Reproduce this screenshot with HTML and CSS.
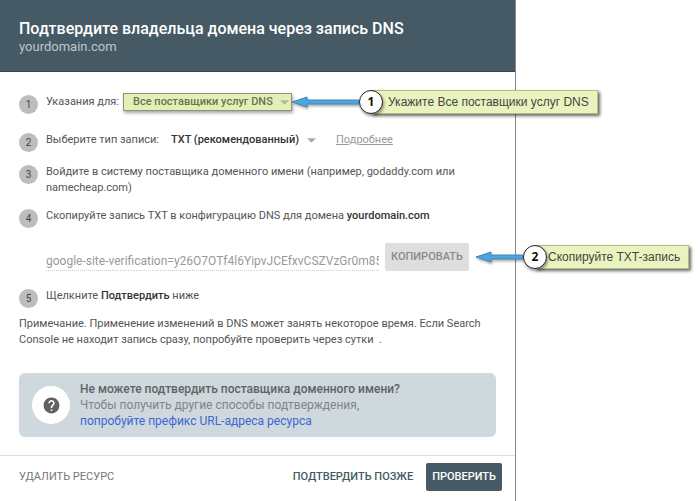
FILE: index.html
```html
<!DOCTYPE html>
<html lang="ru">
<head>
  <meta charset="UTF-8">
  <title>Подтверждение домена</title>
  <meta name="viewport" content="width=device-width, initial-scale=1.0">
  <link rel="stylesheet" href="styles.css">
</head>
<body>
  <main class="dialog">
    <header class="dialog-header">
      <h1 class="title">Подтвердите владельца домена через запись DNS</h1>
      <div class="domain">yourdomain.com</div>
    </header>

    <div class="dialog-body">
      <ol class="steps">
        <li class="step">
          <span class="num">1</span>
          <div class="step-content fields fields-provider">
            <label for="provider">Указания для:</label>
            <div class="picker picker-marked">
              <select id="provider">
                <option>Все поставщики услуг DNS</option>
              </select>
              <svg class="caret" viewBox="0 0 10 5"><path d="M0 0h10L5 5z"/></svg>
              <div class="callout callout-provider">
                <svg class="arrow" viewBox="0 0 68 12"><path d="M1 6 16 1v3h52v4H16v3z"/></svg>
                <span class="callout-num">1</span>
                <span class="callout-text">Укажите Все поставщики услуг DNS</span>
              </div>
            </div>
          </div>
        </li>
        <li class="step">
          <span class="num">2</span>
          <div class="step-content fields">
            <label for="record-type">Выберите тип записи:</label>
            <div class="picker">
              <select id="record-type">
                <option>TXT (рекомендованный)</option>
              </select>
              <svg class="caret" viewBox="0 0 10 5"><path d="M0 0h10L5 5z"/></svg>
            </div>
            <a class="more" href="#">Подробнее</a>
          </div>
        </li>
        <li class="step">
          <span class="num">3</span>
          <div class="step-content">Войдите в систему поставщика доменного имени (например, godaddy.com или namecheap.com)</div>
        </li>
        <li class="step">
          <span class="num">4</span>
          <div class="step-content">
            <label class="record-label" for="record">Скопируйте запись TXT в конфигурацию DNS для домена <b>yourdomain.com</b></label>
            <div class="copy-row">
              <input class="record" id="record" type="text" readonly value="google-site-verification=y26O7OTf4l6YipvJCEfxvCSZVzGr0m85">
              <div class="copy">
                <button class="btn btn-copy" type="button">Копировать</button>
                <div class="callout callout-copy">
                  <svg class="arrow" viewBox="0 0 48 12"><path d="M1 6 16 1v3h32v4H16v3z"/></svg>
                  <span class="callout-num">2</span>
                  <span class="callout-text">Скопируйте TXT-запись</span>
                </div>
              </div>
            </div>
          </div>
        </li>
        <li class="step">
          <span class="num">5</span>
          <div class="step-content">Щелкните <b>Подтвердить</b> ниже</div>
        </li>
      </ol>

      <p class="note">Примечание. Применение изменений в DNS может занять некоторое время. Если Search Console не находит запись сразу, попробуйте проверить через сутки &nbsp;.</p>

      <section class="help">
        <span class="help-icon">
          <svg viewBox="0 0 24 24"><path d="M12 2C6.48 2 2 6.48 2 12s4.48 10 10 10 10-4.48 10-10S17.52 2 12 2zm1 17h-2v-2h2v2zm2.07-7.75-.9.92C13.45 12.9 13 13.5 13 15h-2v-.5c0-1.1.45-2.1 1.17-2.83l1.24-1.26c.37-.36.59-.86.59-1.41 0-1.1-.9-2-2-2s-2 .9-2 2H8c0-2.21 1.79-4 4-4s4 1.79 4 4c0 .88-.36 1.68-.93 2.25z"/></svg>
        </span>
        <div>
          <b>Не можете подтвердить поставщика доменного имени?</b><br>
          Чтобы получить другие способы подтверждения,<br>
          <a class="help-link" href="#">попробуйте префикс URL-адреса ресурса</a>
        </div>
      </section>
    </div>

    <footer class="dialog-footer">
      <button class="btn btn-remove" type="button">Удалить ресурс</button>
      <button class="btn btn-later" type="button">Подтвердить позже</button>
      <button class="btn btn-verify" type="button">Проверить</button>
    </footer>
  </main>
</body>
</html>
```

FILE: styles.css
```css
* {
    box-sizing: border-box;
}

body {
    margin: 0;
    background: #fff;
    color: #555;
    font: 11px/16px Roboto, "Liberation Sans", sans-serif;
}

b {
    font-weight: 500;
    color: #333;
}

.dialog {
    display: flex;
    flex-direction: column;
    max-width: 516px;
    min-height: 100vh;
    border-right: 1px solid #888;
}

.dialog-header {
    padding: 19px 19px 16px;
    background: #455a64;
    border-bottom: 1px solid #35454d;
    color: #fff;
}

.title {
    margin: 0;
    font-size: 16px;
    line-height: 20px;
    font-weight: 500;
}

.domain {
    font-size: 13px;
    color: #bcc7cc;
}

.dialog-body {
    flex: 1;
    padding: 22px 19px 18px;
}

.steps {
    display: flex;
    flex-direction: column;
    gap: 12px;
    margin: 0;
    padding: 0;
    list-style: none;
}

.step {
    display: flex;
    gap: 8px;
}

.num {
    flex: none;
    width: 19px;
    height: 19px;
    margin-top: 1px;
    border-radius: 50%;
    background: #bdbdbd;
    color: #444;
    font-size: 10px;
    line-height: 20px;
    text-align: center;
}

.step-content {
    flex: 1;
    min-width: 0;
}

.fields {
    display: flex;
    align-items: center;
    height: 16px;
    margin-bottom: 4px;
    white-space: nowrap;
}

.fields-provider {
    margin-bottom: 10px;
}

/* drop-downs */
.picker {
    position: relative;
    display: flex;
    align-items: center;
    height: 18px;
    margin-left: 12px;
    padding-right: 4px;
}

.picker select {
    appearance: none;
    margin: 0;
    padding: 0 7px 0 0;
    border: 0;
    background: none;
    color: #333;
    font: inherit;
    font-weight: 500;
}

.caret {
    width: 9px;
    height: 5px;
    fill: #aaa;
}

.picker-marked {
    margin-left: 4px;
    padding: 0 2px 0 9px;
    border: 1px solid #8a937c;
    background: #e4efb8;
    box-shadow: 1px 2px 3px rgba(0, 0, 0, .35);
}

.picker-marked select {
    color: #69734d;
}

.picker-marked .caret {
    fill: #b3bb96;
}

.more {
    margin-left: 16px;
    color: #999;
}

/* copy row */
.record-label {
    display: block;
}

.copy-row {
    display: flex;
    align-items: flex-end;
    gap: 6px;
    margin: 19px 0 5px;
}

.record {
    flex: 1;
    min-width: 0;
    height: 20px;
    padding: 0;
    border: 0;
    border-bottom: 1px dotted #ccc;
    background: none;
    color: #999;
    font: inherit;
    font-size: 12px;
}

.copy {
    position: relative;
    margin-right: 27px;
}

.btn {
    height: 28px;
    padding: 0;
    border: 0;
    border-radius: 2px;
    background: none;
    font: inherit;
    font-weight: 500;
    text-transform: uppercase;
}

.btn-copy {
    display: block;
    width: 84px;
    background: #dedede;
    color: #8a8a8a;
}

/* callouts */
.callout {
    position: absolute;
    left: 100%;
    top: 50%;
    display: flex;
    align-items: center;
    height: 24px;
    margin-top: -12px;
    white-space: nowrap;
}

.callout-copy {
    margin-left: 6px;
}

.arrow {
    flex: none;
    height: 12px;
    fill: #4ea6dc;
    stroke: #3d87b5;
    stroke-width: 1;
    filter: drop-shadow(1px 2px 1px rgba(0, 0, 0, .3));
}

.callout-num {
    position: relative;
    flex: none;
    width: 24px;
    height: 24px;
    border: 1px solid #222;
    border-radius: 50%;
    background: #fff;
    box-shadow: 1px 2px 3px rgba(0, 0, 0, .4);
    color: #111;
    font: bold 12px/22px "Open Sans", sans-serif;
    text-align: center;
    z-index: 1;
}

.callout-text {
    height: 24px;
    margin-left: -12px;
    padding: 0 8px 0 16px;
    border: 1px solid #b4bd8c;
    background: #e9f3be;
    box-shadow: 2px 2px 3px rgba(0, 0, 0, .6);
    color: #444;
    font: 12px/22px "Liberation Sans", sans-serif;
}

.callout-copy .callout-text {
    padding-left: 12px;
}

.note {
    margin: 8px 0 25px;
}

.help {
    display: flex;
    align-items: center;
    gap: 10px;
    padding: 8px 13px;
    border-radius: 6px;
    background: #cfd8dc;
    color: #808587;
    font-size: 12px;
}

.help b {
    color: #5f6466;
}

.help-icon {
    display: flex;
    align-items: center;
    justify-content: center;
    width: 38px;
    height: 38px;
    border-radius: 50%;
    background: #fff;
}

.help-icon svg {
    width: 19px;
    fill: #616161;
}

.help-link {
    color: #3c67d6;
    text-decoration: none;
}

.dialog-footer {
    display: flex;
    align-items: center;
    padding: 7px 13px 10px 19px;
    border-top: 1px solid #ddd;
}

.btn-remove {
    margin-right: auto;
    color: #777;
    font-weight: 400;
}

.btn-later {
    margin-right: 13px;
    color: #455a64;
}

.btn-verify {
    padding: 0 6px;
    background: #455a64;
    color: #fff;
}
```
